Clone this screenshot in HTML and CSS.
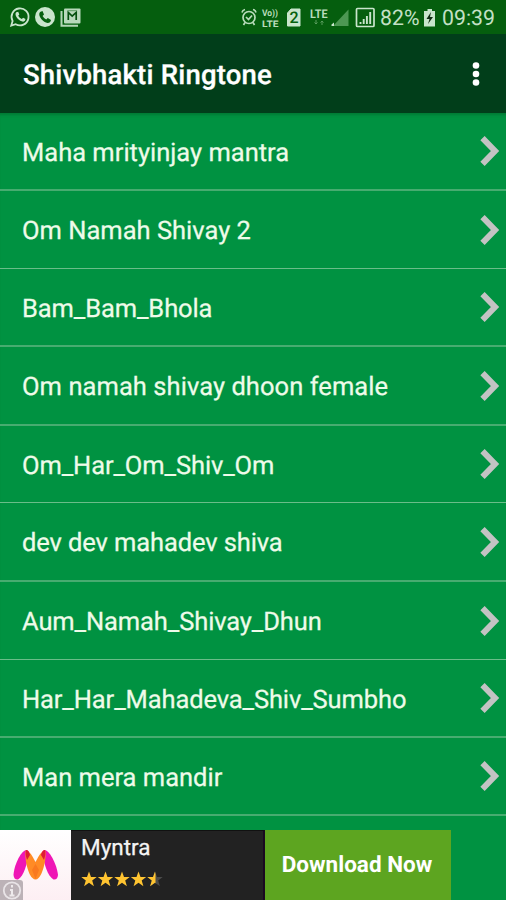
FILE: index.html
```html
<!DOCTYPE html>
<html lang="en">
<head>
<meta charset="utf-8">
<title>Shivbhakti Ringtone</title>
<link rel="stylesheet" href="styles.css">
</head>
<body>
<svg class="defs" width="0" height="0"><defs>
  <symbol id="chevron" viewBox="0 0 22 34"><path d="M3.500 4.200L16 17L3.500 29.800" fill="none" stroke="#c3c3c3" stroke-width="6"/></symbol>
  <path id="star" d="M0-8L2-2.500H7.700L3.200 1L4.900 6.700L0 3.300L-4.900 6.700L-3.200 1L-7.700-2.500H-2Z"/>
</defs></svg>
<div class="screen">
  <header class="status">
    <svg class="notifications" width="76" height="24" viewBox="0 0 76 24">
      <g fill="none" stroke="#c9e5cc" stroke-width="1.800"><path d="M2.200 20.700L3.600 16A8.500 8.500 0 1 1 6.700 19.200Z"/></g>
      <path d="M7.200 7.200L9.200 6.800L10.300 9.500L9.200 10.800Q10.400 13 12.800 14L14.100 12.800L16.500 14.100Q16.500 16.500 14.200 16.700C10.200 16.300 6.300 11.800 6.500 9Q6.600 8 7.200 7.200Z" fill="#c9e5cc"/>
      <circle cx="36" cy="12" r="10" fill="#c9e5cc"/>
      <path d="M31 7L33.500 6L35 9.500L33.600 11Q35 13.500 37.200 14.600L38.800 13.100L42 15Q41.500 18 38.700 18C34 17.300 29.700 12 30.300 8.500Z" fill="#06600f"/>
      <path d="M52.500 6V20.800H69" fill="none" stroke="#b4d6b7" stroke-width="2"/>
      <rect x="55" y="3.500" width="16.500" height="15" rx="1" fill="#b9d9bc"/>
      <path d="M59.300 15V7.500L63.200 11.200L67.200 7.500V15" fill="none" stroke="#06500f" stroke-width="1.700"/>
      <path d="M58.500 5.700H68" stroke="#5f9d65" stroke-width="1"/>
    </svg>
    <svg class="indicators" width="266" height="34" viewBox="240 0 266 34">
      <g fill="none" stroke="#b9dcbb" stroke-width="1.700"><circle cx="249" cy="17.500" r="6"/><path d="M242 12.500Q242.500 10 245 9.500M256 12.500Q255.500 10 253 9.500M245 22.500L243.500 25M253 22.500L254.500 25M246 17L248.500 19.500L252 15.500"/></g>
      <g class="tiny"><text x="262" y="16" textLength="16" lengthAdjust="spacingAndGlyphs">Vo))</text><text x="262" y="26.500" textLength="16.500" lengthAdjust="spacingAndGlyphs">LTE</text></g>
      <path d="M291 9H300V26H287.500V13Z" fill="#c9e5cc" stroke="#c9e5cc"/>
      <text class="sim" x="289.500" y="23">2</text>
      <text class="lte" x="310" y="18" textLength="17.500" lengthAdjust="spacingAndGlyphs">LTE</text>
      <path d="M316 20V24M314.500 22.500L316 24L317.500 22.500M322 25V21M320.500 22.500L322 21L323.500 22.500" fill="none" stroke="#589b5c"/>
      <path d="M333 26L348.500 9.500V26Z" fill="#4d9753"/><path d="M331.500 26V24.500L334 22.500V26Z" fill="#c9e5cc"/>
      <rect x="356.500" y="8.500" width="17.500" height="18" rx="1" fill="none" stroke="#c9e5cc" stroke-width="1.700"/>
      <path d="M360.500 24V22M363.700 24V19M366.900 24V16M370.200 24V12" stroke="#c9e5cc" stroke-width="1.900"/>
      <text class="info" x="380" y="25" textLength="39.500" lengthAdjust="spacingAndGlyphs">82%</text>
      <path d="M427.500 9H432V11H435V26.500H424V11H427.500Z" fill="#c9e5cc"/><path d="M431 12L426.500 19H429.500L428 24L433 17H430Z" fill="#102c13"/>
      <text class="info" x="442" y="25" textLength="53" lengthAdjust="spacingAndGlyphs">09:39</text>
    </svg>
  </header>
  <div class="appbar">
    <h1>Shivbhakti Ringtone</h1>
    <svg width="10" height="28" viewBox="0 0 10 28" fill="#fff"><circle cx="5" cy="4.500" r="3.300"/><circle cx="5" cy="13" r="3.300"/><circle cx="5" cy="21.500" r="3.300"/></svg>
  </div>
  <ul class="songs">
    <li><span>Maha mrityinjay mantra</span><svg><use href="#chevron"/></svg></li>
    <li class="thin"><span>Om Namah Shivay 2</span><svg><use href="#chevron"/></svg></li>
    <li class="tight"><span>Bam_Bam_Bhola</span><svg><use href="#chevron"/></svg></li>
    <li class="loose"><span>Om namah shivay dhoon female</span><svg><use href="#chevron"/></svg></li>
    <li class="thin tight"><span>Om_Har_Om_Shiv_Om</span><svg><use href="#chevron"/></svg></li>
    <li class="tight"><span>dev dev mahadev shiva</span><svg><use href="#chevron"/></svg></li>
    <li class="thin tight"><span>Aum_Namah_Shivay_Dhun</span><svg><use href="#chevron"/></svg></li>
    <li class="tight"><span>Har_Har_Mahadeva_Shiv_Sumbho</span><svg><use href="#chevron"/></svg></li>
    <li><span>Man mera mandir</span><svg><use href="#chevron"/></svg></li>
  </ul>
  <div class="ad">
    <svg class="logo" width="71" height="70" viewBox="0 0 71 70">
      <defs><linearGradient id="paper" x2="0" y2="1"><stop stop-color="#fff"/><stop offset="1" stop-color="#fdeff3"/></linearGradient></defs>
      <path d="M0 0H71V70H0Z" fill="url(#paper)"/>
      <path d="M26 20C20 22 14 36 13.500 45Q14 50 18 49.500C24 46 27 34 29 23Q28.500 20 26 20Z" fill="#ef16b5"/>
      <path d="M45 20C51 22 57 36 58 45Q57.500 50 53.500 49.500C47.500 46 44 34 42.500 23Q43 20 45 20Z" fill="#ef16b5"/>
      <path d="M26 20Q30 21 35.500 32Q41 21 45 20C47 24 44 43 38.500 48Q35.500 51 32.500 48C27 43 24 24 26 20Z" fill="#ff8b25"/>
      <path d="M26 20Q29 20 30 25L27 30Q25 24 26 20ZM45 20Q42 20 41 25L44 30Q46 24 45 20Z" fill="#df1b35"/>
      <path d="M32 40L35.500 34L39 40L35.500 49Z" fill="#f9791f"/>
      <path d="M0 50H20Q23 50 23 53V70H0Z" fill="#bcb2b7"/><circle cx="12" cy="60.500" r="8.200" fill="none" stroke="#e9e4e7" stroke-width="1.800"/>
      <path d="M12 55V57.500M10 60H12V65M9.500 65.500H14.500" fill="none" stroke="#eeeaec" stroke-width="2"/>
    </svg>
    <div class="app">
      <div class="name">Myntra</div>
      <svg width="84" height="18" viewBox="0 0 84 18">
        <defs><clipPath id="half"><path d="M65 0H74.500V18H65Z"/></clipPath></defs>
        <g fill="#ffc431"><use href="#star" x="8" y="9.500"/><use href="#star" x="24.500" y="9.500"/><use href="#star" x="41" y="9.500"/><use href="#star" x="57.500" y="9.500"/></g>
        <use href="#star" x="74" y="9.500" fill="#4b4b4b"/><g clip-path="url(#half)"><use href="#star" x="74" y="9.500" fill="#ffc431"/></g>
      </svg>
    </div>
    <div class="download">Download Now</div>
  </div>
</div>
</body>
</html>
```
FILE: styles.css
```css
* { box-sizing: border-box; }
body { margin: 0; background: #009241; font-family: Roboto, sans-serif; text-rendering: geometricPrecision; }
.defs { display: none; }
.screen { width: 506px; height: 900px; overflow: hidden; display: flex; flex-direction: column; }
svg { display: block; flex: none; }
.status { flex: none; height: 34px; background: #055e0e; display: flex; justify-content: space-between; }
.notifications { margin: 5px 0 0 9px; }
.tiny { font-size: 9px; font-weight: 700; fill: #b9dcbb; }
.sim { font-size: 16px; font-weight: 500; fill: #06600f; }
.lte { font-size: 12px; font-weight: 700; fill: #b9dcbb; }
.info { font-size: 21.500px; fill: #c3e0c5; }
.appbar { flex: none; height: 79px; background: #013e1a; display: flex; align-items: center; justify-content: space-between; padding: 2px 25px 0 23px; }
h1 { margin: 0; color: #fff; font-size: 27.500px; font-weight: 500; line-height: 32px; white-space: nowrap; letter-spacing: 0.2px; -webkit-text-stroke: 0.3px #fff; }
.songs { flex: none; height: 717px; list-style: none; margin: 0; padding: 0; box-shadow: inset 0 4px 3px -2px #007a33; }
.songs li { height: 78px; border-bottom: 2px solid #47ac70; display: flex; align-items: center; justify-content: space-between; padding: 2px 5px 0 22px; color: #eefbe9; font-size: 25.500px; white-space: nowrap; -webkit-text-stroke: 0.25px #eefbe9; }
.songs li:nth-child(4), .songs li:nth-child(6) { height: 79px; }
.songs li:nth-child(5) { height: 77px; }
.songs li.thin { border-bottom: 1px solid #6abd89; }
.songs li.tight { letter-spacing: -0.11px; }
.songs li.loose { letter-spacing: 0.06px; }
.songs span { margin-top: 1px; }
.songs svg { width: 22px; height: 34px; margin-bottom: 2px; }
.ad { flex: none; width: 451px; height: 70px; display: flex; }
.app { width: 194px; background: #222; border-top: 1px solid #111; border-right: 2px solid #1a0a20; padding: 4px 0 0 10px; }
.name { color: #f4f4f4; font-size: 22.500px; line-height: 27px; -webkit-text-stroke: 0.25px #f4f4f4; }
.app svg { margin-top: 8px; }
.download { width: 186px; padding-right: 2px; background: #5da520; color: #fff; font-size: 22.500px; font-weight: 700; line-height: 70px; text-align: center; white-space: nowrap; }
```
